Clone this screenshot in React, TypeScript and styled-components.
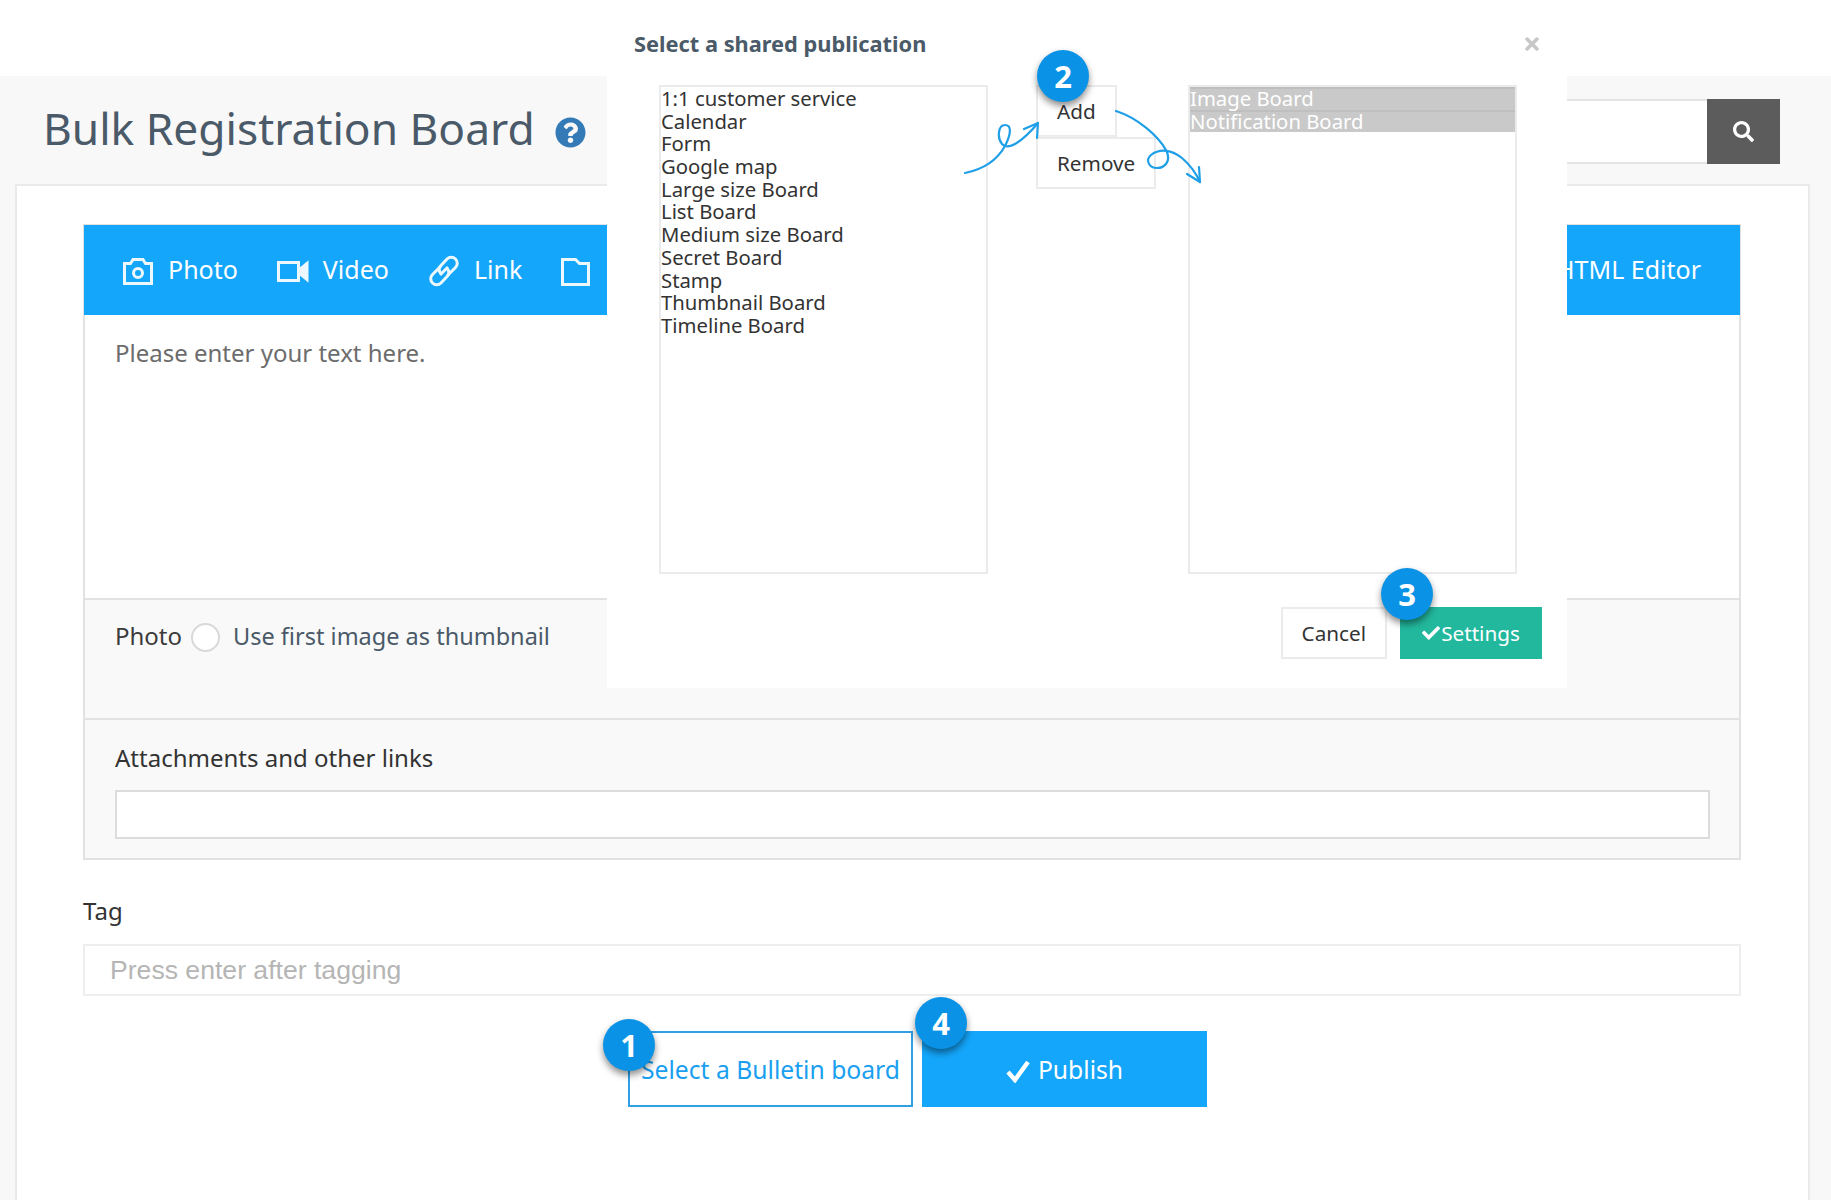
import React from "react";
import styled, { createGlobalStyle } from "styled-components";
import { FaCheck, FaQuestionCircle, FaSearch, FaTimes } from "react-icons/fa";

const GlobalStyle = createGlobalStyle`
  html, body {
    margin: 0;
    padding: 0;
    background: #fff;
    font-family: "Noto Sans", "Open Sans", sans-serif;
  }
  * {
    box-sizing: border-box;
  }
`;

const Page = styled.div`
  position: relative;
  width: 1831px;
  height: 1200px;
  padding-top: 76px;
  overflow: hidden;
`;

const Shell = styled.div`
  height: 1124px;
  background: #f8f8f8;
  padding-left: 15px;
  padding-right: 21px;
`;

const Header = styled.div`
  display: flex;
  align-items: center;
  justify-content: space-between;
  height: 108px;
  padding-left: 28px;
  padding-right: 30px;
  padding-top: 2px;
`;

const TitleRow = styled.div`
  display: flex;
  align-items: center;
  gap: 20px;
  padding-bottom: 7px;
`;

const Title = styled.h1`
  margin: 0;
  font-size: 44.3px;
  font-weight: 400;
  color: #4a5a68;
`;

const HelpIcon = styled(FaQuestionCircle)`
  color: #337ab7;
  font-size: 31px;
  margin-top: 9px;
`;

const SearchBox = styled.div`
  display: flex;
  width: 500px;
  height: 65px;
`;

const SearchInput = styled.div`
  flex: 1;
  background: #fff;
  border-top: 2px solid #e4e4e4;
  border-bottom: 2px solid #e4e4e4;
`;

const SearchButton = styled.div`
  width: 73px;
  display: flex;
  align-items: center;
  justify-content: center;
  background: #5c5c5c;
  color: #fff;
  font-size: 21px;
`;

const Card = styled.div`
  height: 1016px;
  background: #fff;
  border: 2px solid #eaeaea;
  border-bottom: 0;
  padding: 38px 67px 0 66px;
`;

const Editor = styled.div`
  border: 2px solid #e2e2e2;
  background: #f9f9f9;
`;

const Toolbar = styled.div`
  display: flex;
  align-items: center;
  justify-content: space-between;
  height: 90px;
  margin: -1px -1px 0;
  background: #14a6fb;
  padding: 0 39px 2px 38px;
`;

const ToolGroup = styled.div`
  display: flex;
  align-items: center;
  gap: 39px;
`;

const Tool = styled.div`
  display: flex;
  align-items: center;
  gap: 14px;
  color: #fff;
  font-size: 25px;
`;

const ToolIcon = styled.svg`
  width: 32px;
  height: 32px;
  margin-top: 4px;
  fill: none;
  stroke: #fff;
  stroke-width: 3;
  opacity: 0.92;
`;

const TextArea = styled.div`
  height: 283px;
  background: #fff;
  padding: 21px 30px;
  font-size: 24px;
  color: #6c6c6c;
`;

const PhotoRow = styled.div`
  display: flex;
  align-items: center;
  height: 120px;
  border-top: 2px solid #e2e2e2;
  padding: 0 30px 47px;
  font-size: 24px;
`;

const PhotoLabel = styled.span`
  color: #3b3b3b;
`;

const Radio = styled.span`
  width: 29px;
  height: 29px;
  margin: 3px 13px 0 9px;
  border-radius: 50%;
  background: #fff;
  border: 2px solid #d9d9d9;
`;

const PhotoHint = styled.span`
  color: #4a5a68;
  font-size: 23.5px;
`;

const Attachments = styled.div`
  height: 140px;
  border-top: 2px solid #e2e2e2;
  padding: 22px 29px 0 30px;
`;

const FieldLabel = styled.div`
  font-size: 24px;
  line-height: 32px;
  color: #333;
`;

const LinkInput = styled.div`
  height: 49px;
  margin-top: 16px;
  background: #fff;
  border: 2px solid #dcdcdc;
`;

const TagField = styled.div`
  margin-top: 35px;
`;

const TagInput = styled.div`
  display: flex;
  align-items: center;
  height: 52px;
  margin-top: 17px;
  padding-left: 25px;
  background: #fff;
  border: 2px solid #eee;
  color: #b5b5b5;
  font-family: "Liberation Sans", Arial, sans-serif;
  font-size: 26.6px;
`;

const Actions = styled.div`
  display: flex;
  justify-content: center;
  gap: 9px;
  margin-top: 35px;
  padding-left: 11px;
`;

const ActionButton = styled.div<{ $primary?: boolean }>`
  position: relative;
  display: flex;
  align-items: center;
  justify-content: center;
  gap: 8px;
  width: 285px;
  height: 76px;
  font-size: 24.7px;
  color: ${(p) => (p.$primary ? "#fff" : "#1a9ff0")};
  background: ${(p) => (p.$primary ? "#14a6fb" : "#fff")};
  border: 2px solid ${(p) => (p.$primary ? "#14a6fb" : "#2f9fe6")};
`;

const PublishCheck = styled.svg`
  width: 24px;
  height: 24px;
  margin-top: 3px;
  fill: none;
  stroke: #fff;
  stroke-width: 4.4;
`;

const Badge = styled.span<{ $left: number; $top: number }>`
  position: absolute;
  left: ${(p) => p.$left}px;
  top: ${(p) => p.$top}px;
  width: 52px;
  height: 52px;
  display: flex;
  align-items: center;
  justify-content: center;
  border-radius: 50%;
  background: #0a93e6;
  color: #fff;
  font-size: 31px;
  font-weight: 700;
  box-shadow: 0 4px 7px rgba(0, 0, 0, 0.45);
  z-index: 3;
`;

const Modal = styled.div`
  position: absolute;
  top: 0;
  left: 607px;
  width: 960px;
  height: 688px;
  background: #fff;
  padding: 29px 25px 0 27px;
`;

const ModalHead = styled.div`
  display: flex;
  align-items: center;
  justify-content: space-between;
`;

const ModalTitle = styled.h4`
  margin: 0;
  font-size: 21.8px;
  line-height: 30px;
  font-weight: 700;
  color: #4a5a68;
`;

const CloseIcon = styled(FaTimes)`
  color: #c8c8c8;
  font-size: 20px;
`;

const PickerRow = styled.div`
  display: flex;
  align-items: flex-start;
  margin-top: 26px;
  padding-left: 25px;
`;

const ListBox = styled.div`
  width: 329px;
  height: 489px;
  border: 2px solid #ebebeb;
  font-size: 20.3px;
  line-height: 22.7px;
`;

const ListItem = styled.div<{ $selected?: boolean }>`
  height: 22.7px;
  white-space: nowrap;
  color: ${(p) => (p.$selected ? "#fff" : "#333")};
  background: ${(p) => (p.$selected ? "#c9c9c9" : "transparent")};
  box-shadow: ${(p) => (p.$selected ? "inset 0 2px 0 #bfbfbf" : "none")};
`;

const MoveButtons = styled.div`
  display: flex;
  flex-direction: column;
  align-items: flex-start;
  width: 200px;
  padding-left: 48px;
`;

const PlainButton = styled.div`
  display: flex;
  align-items: center;
  justify-content: center;
  height: 52px;
  padding: 0 19px;
  background: #fff;
  border: 2px solid #ebebeb;
  font-size: 20.7px;
  color: #333;
`;

const ModalFooter = styled.div`
  display: flex;
  justify-content: flex-end;
  gap: 13px;
  margin-top: 33px;
`;

const SaveButton = styled.div`
  display: flex;
  align-items: center;
  justify-content: center;
  gap: 1px;
  width: 142px;
  height: 52px;
  background: #22b89e;
  color: #fff;
  font-size: 20.7px;

  svg {
    font-size: 18px;
  }
`;

const Arrows = styled.svg`
  position: absolute;
  left: 950px;
  top: 70px;
  width: 280px;
  height: 130px;
  fill: none;
  stroke: #1f9fe8;
  stroke-width: 2.2;
  stroke-linecap: round;
  stroke-linejoin: round;
  pointer-events: none;
`;

const boards = [
  "1:1 customer service",
  "Calendar",
  "Form",
  "Google map",
  "Large size Board",
  "List Board",
  "Medium size Board",
  "Secret Board",
  "Stamp",
  "Thumbnail Board",
  "Timeline Board",
];

export default function App() {
  return (
    <Page>
      <GlobalStyle />
      <Shell>
        <Header>
          <TitleRow>
            <Title>Bulk Registration Board</Title>
            <HelpIcon />
          </TitleRow>
          <SearchBox>
            <SearchInput />
            <SearchButton>
              <FaSearch />
            </SearchButton>
          </SearchBox>
        </Header>
        <Card>
          <Editor>
            <Toolbar>
              <ToolGroup>
                <Tool>
                  <ToolIcon viewBox="0 0 32 32">
                    <path d="M2.5 8.5h6l2.5-4h10l2.5 4h6v20h-27z" />
                    <circle cx="16" cy="18" r="4.5" />
                  </ToolIcon>
                  Photo
                </Tool>
                <Tool>
                  <ToolIcon viewBox="0 0 32 32">
                    <rect x="1.5" y="7.5" width="20" height="18" />
                    <path d="M24 13.5l6-5v16l-6-5z" fill="#fff" />
                  </ToolIcon>
                  Video
                </Tool>
                <Tool>
                  <ToolIcon viewBox="0 0 32 32">
                    <path d="M12 20l8-8" />
                    <path d="M12.5 11.5l-8 8a6 6 0 0 0 8.5 8.5l6.5-7a5.6 5.6 0 0 0 0-7" />
                    <path d="M19.5 20.5l8-8a6 6 0 0 0-8.5-8.5l-6.5 7a5.6 5.6 0 0 0 0 7" />
                  </ToolIcon>
                  Link
                </Tool>
                <Tool>
                  <ToolIcon viewBox="0 0 32 32">
                    <path d="M1.5 4.5h13l4 4h9v21h-26z" />
                  </ToolIcon>
                </Tool>
              </ToolGroup>
              <Tool>HTML Editor</Tool>
            </Toolbar>
            <TextArea>Please enter your text here.</TextArea>
            <PhotoRow>
              <PhotoLabel>Photo</PhotoLabel>
              <Radio />
              <PhotoHint>Use first image as thumbnail</PhotoHint>
            </PhotoRow>
            <Attachments>
              <FieldLabel>Attachments and other links</FieldLabel>
              <LinkInput />
            </Attachments>
          </Editor>
          <TagField>
            <FieldLabel>Tag</FieldLabel>
            <TagInput>Press enter after tagging</TagInput>
          </TagField>
          <Actions>
            <ActionButton>
              Select a Bulletin board
              <Badge $left={-27} $top={-14}>1</Badge>
            </ActionButton>
            <ActionButton $primary>
              <PublishCheck viewBox="0 0 24 24">
                <path d="M2 13l7 8L22 3" />
              </PublishCheck>
              Publish
              <Badge $left={-9} $top={-36}>4</Badge>
            </ActionButton>
          </Actions>
        </Card>
      </Shell>
      <Modal>
        <ModalHead>
          <ModalTitle>Select a shared publication</ModalTitle>
          <CloseIcon />
        </ModalHead>
        <PickerRow>
          <ListBox>
            {boards.map((b) => (
              <ListItem key={b}>{b}</ListItem>
            ))}
          </ListBox>
          <MoveButtons>
            <PlainButton>Add</PlainButton>
            <PlainButton>Remove</PlainButton>
          </MoveButtons>
          <ListBox>
            <ListItem $selected>Image Board</ListItem>
            <ListItem $selected>Notification Board</ListItem>
          </ListBox>
        </PickerRow>
        <ModalFooter>
          <PlainButton>Cancel</PlainButton>
          <SaveButton>
            <FaCheck />
            Settings
          </SaveButton>
        </ModalFooter>
        <Badge $left={430} $top={50}>2</Badge>
        <Badge $left={774} $top={568}>3</Badge>
      </Modal>
      <Arrows viewBox="0 0 280 130">
        <path d="M15 103C30 100 46 92 55 76C62 62 61 55 55 55C48 55 47 68 52 74C58 81 72 72 88 53" />
        <path d="M74 59L88 53L87 68" />
        <path d="M166 41C188 48 208 66 216 80C222 92 214 98 207 98C199 98 195 90 201 85C210 78 222 80 232 88C240 95 246 103 250 112" />
        <path d="M237 104L250 112L249 97" />
      </Arrows>
    </Page>
  );
}
